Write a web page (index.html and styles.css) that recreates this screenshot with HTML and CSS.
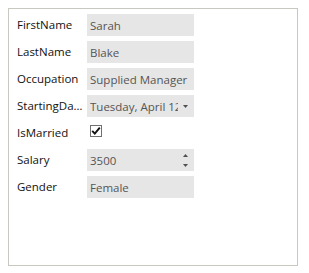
FILE: index.html
```html
<!DOCTYPE html>
<html lang="en">
<head>
    <meta charset="UTF-8">
    <link rel="stylesheet" href="styles.css">
</head>
<body>
    <div class="frame">
        <div class="form">
            <label class="label">FirstName</label>
            <div class="field"><span class="value">Sarah</span></div>

            <label class="label">LastName</label>
            <div class="field"><span class="value">Blake</span></div>

            <label class="label">Occupation</label>
            <div class="field"><span class="value">Supplied Manager</span></div>

            <label class="label">StartingDate</label>
            <div class="field picker">
                <span class="value">Tuesday, April 12</span>
                <svg class="arrow" width="5" height="3" viewBox="0 0 5 3"><path d="M0 0h5L2.5 3z" fill="#505050"/></svg>
            </div>

            <label class="label">IsMarried</label>
            <div class="check-cell">
                <span class="check">
                    <svg width="10" height="10" viewBox="0 0 10 10"><path d="M1.2 4.8l2.6 2.8L8.8 1.6" fill="none" stroke="#111" stroke-width="1.9"/></svg>
                </span>
            </div>

            <label class="label">Salary</label>
            <div class="field spinner">
                <span class="value">3500</span>
                <span class="spin">
                    <svg width="5" height="3" viewBox="0 0 5 3"><path d="M0 3h5L2.5 0z" fill="#505050"/></svg>
                    <svg width="5" height="3" viewBox="0 0 5 3"><path d="M0 0h5L2.5 3z" fill="#505050"/></svg>
                </span>
            </div>

            <label class="label">Gender</label>
            <div class="field"><span class="value">Female</span></div>
        </div>
    </div>
</body>
</html>
```

FILE: styles.css
```css
body {
    margin: 8px;
    background-color: #fff;
    font-family: "Open Sans", "Noto Sans", sans-serif;
    font-size: 11.5px;
}

.frame {
    box-sizing: border-box;
    width: 290px;
    height: 258px;
    border: 1px solid #c8c8c0;
    padding: 5px 8px;
}

.form {
    display: grid;
    grid-template-columns: 70px 107px;
    grid-auto-rows: 22px;
    row-gap: 5px;
}

.label {
    display: block;
    color: #111;
    white-space: nowrap;
    overflow: hidden;
    text-overflow: ellipsis;
    padding-right: 4px;
    line-height: 22px;
}

.field {
    display: flex;
    align-items: center;
    background-color: #e6e6e6;
    padding: 0 6px 0 3px;
    color: #555;
    overflow: hidden;
}

.value {
    flex: 1;
    white-space: nowrap;
    overflow: hidden;
}

.arrow {
    margin-left: 5px;
    flex: none;
}

.spin {
    display: flex;
    flex-direction: column;
    gap: 7px;
}

.check-cell {
    padding: 3px 0 0 3px;
}

.check {
    box-sizing: border-box;
    width: 12px;
    height: 12px;
    border: 1px solid #707070;
    display: flex;
    align-items: center;
    justify-content: center;
}
```
